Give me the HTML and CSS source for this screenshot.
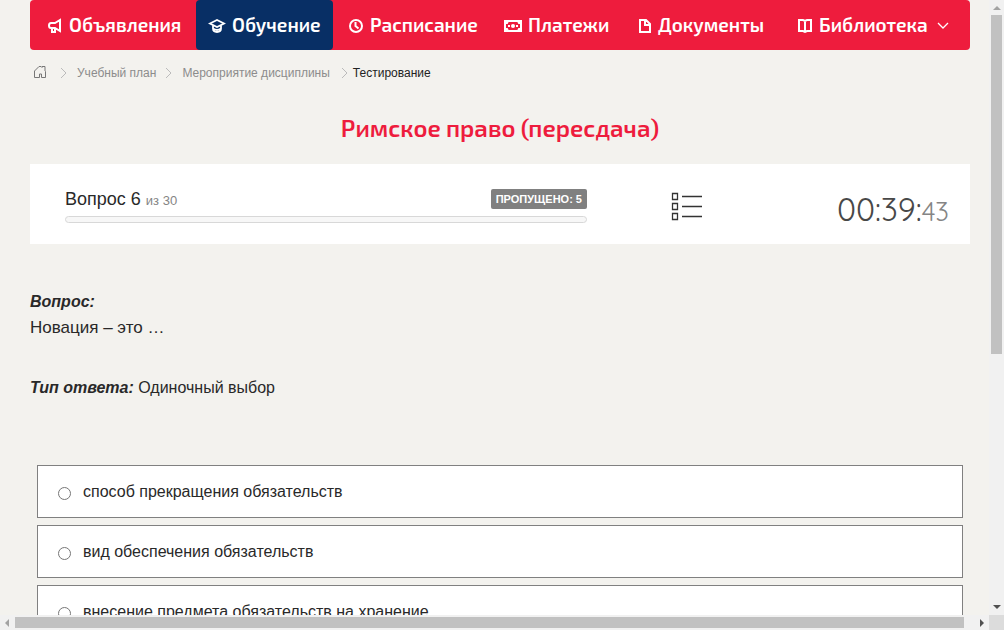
FILE: index.html
```html
<!DOCTYPE html>
<html lang="ru">
<head>
<meta charset="utf-8">
<meta name="viewport" content="width=device-width, initial-scale=1">
<title>Тестирование</title>
<link rel="stylesheet" href="styles.css">
</head>
<body>
<div class="window">
  <div class="viewport">
    <nav class="nav" aria-label="Главное меню">
      <a class="nav-item" href="#"><svg width="16" height="16" viewBox="0 0 16 16" fill="none" stroke="currentColor" stroke-width="2"><path d="M13 2v11L8 10H4Q2 10 2 7.500T4 5h4zM5 10v4h3v-3"/></svg><span>Объявления</span></a>
      <a class="nav-item nav-item-active" href="#"><svg width="18" height="16" viewBox="0 0 18 16" fill="none" stroke="currentColor" stroke-width="1.800"><path d="M2 5.500L9 2l7 3.500L9 9zM5 7.500v3q0 3.500 4 3.500t4-3.500v-3M5 10.500q4 3 8 0"/></svg><span>Обучение</span></a>
      <a class="nav-item" href="#"><svg width="16" height="16" viewBox="0 0 16 16" fill="none" stroke="currentColor" stroke-width="2"><circle cx="8" cy="8" r="6"/><path d="M7.500 4v4l3 2.500"/></svg><span>Расписание</span></a>
      <a class="nav-item" href="#"><svg width="18" height="16" viewBox="0 0 18 16" fill="none" stroke="currentColor" stroke-width="2"><path d="M1 3h16v10H1zM1 5h2l1-2M17 5h-2l-1-2M1 11h2l1 2M17 11h-2l-1 2"/><circle cx="9" cy="8" r="2" fill="currentColor" stroke="none"/><path d="M4 8h2M12 8h2"/></svg><span>Платежи</span></a>
      <a class="nav-item" href="#"><svg width="14" height="16" viewBox="0 0 14 16" fill="none" stroke="currentColor" stroke-width="2"><path d="M2 2h6l4 4v8H2zM7 2v5h5"/></svg><span>Документы</span></a>
      <a class="nav-item" href="#"><svg width="16" height="16" viewBox="0 0 16 16" fill="none" stroke="currentColor" stroke-width="2"><path d="M2 2h4l2 1 2-1h4v11h-4l-2 1-2-1H2zM8 3v12"/></svg><span>Библиотека</span><svg class="chevron" width="12" height="8" viewBox="0 0 12 8" fill="none" stroke="currentColor" stroke-width="1.300"><path d="M1 1l5 5 5-5"/></svg></a>
    </nav>

    <nav class="crumbs" aria-label="Навигация">
      <a href="#" aria-label="Главная"><svg width="14" height="14" viewBox="0 0 14 14" fill="none" stroke="#777"><path d="M1.500 12.500V6L6 1.500h2L9 2.500V1.500h3V6l.5.500v6H8.500V9h-2v3.500z"/></svg></a>
      <svg class="sep" width="8" height="12" viewBox="0 0 8 12"><path d="M1 1l5 5-5 5"/></svg>
      <a href="#">Учебный план</a>
      <svg class="sep" width="8" height="12" viewBox="0 0 8 12"><path d="M1 1l5 5-5 5"/></svg>
      <a href="#">Мероприятие дисциплины</a>
      <svg class="sep sep-last" width="8" height="12" viewBox="0 0 8 12"><path d="M1 1l5 5-5 5"/></svg>
      <span class="crumb-current">Тестирование</span>
    </nav>

    <h1 class="title">Римское право (пересдача)</h1>

    <section class="status">
      <div class="progress">
        <div class="progress-head">
          <div class="counter">Вопрос 6 <small>из 30</small></div>
          <span class="badge">ПРОПУЩЕНО: 5</span>
        </div>
        <div class="track"></div>
      </div>
      <button class="list-button" type="button" aria-label="Список вопросов"><svg width="32" height="30" viewBox="0 0 32 30" fill="none" stroke="#333" stroke-width="1.300"><path d="M1.500 1.500h5v6h-5zM1.500 11.500h5v6h-5zM1.500 21.500h5v6h-5zM11 4.500h20M11 14.500h20M11 24.500h20"/></svg></button>
      <div class="timer">00:39:<span>43</span></div>
    </section>

    <section class="question">
      <h2>Вопрос:</h2>
      <p class="question-text">Новация – это …</p>
      <p class="answer-type"><strong>Тип ответа:</strong> Одиночный выбор</p>
    </section>

    <form class="answers">
      <label class="answer"><input type="radio" name="answer"><span>способ прекращения обязательств</span></label>
      <label class="answer"><input type="radio" name="answer"><span>вид обеспечения обязательств</span></label>
      <label class="answer"><input type="radio" name="answer"><span>внесение предмета обязательств на хранение</span></label>
    </form>
  </div>

  <div class="bar bar-vertical" aria-hidden="true">
    <svg width="15" height="15" viewBox="0 0 15 15" fill="#a3a3a3"><path d="M4 10h8L8 6z"/></svg>
    <div class="rail"><div class="thumb"></div></div>
    <svg width="15" height="15" viewBox="0 0 15 15" fill="#505050"><path d="M4 5h8L8 9z"/></svg>
  </div>
  <div class="bar bar-horizontal" aria-hidden="true">
    <svg width="15" height="15" viewBox="0 0 15 15" fill="#a3a3a3"><path d="M9 4v8L5 8z"/></svg>
    <div class="rail"><div class="thumb"></div></div>
    <svg width="15" height="15" viewBox="0 0 15 15" fill="#505050"><path d="M6 4v8l4-4z"/></svg>
  </div>
  <div class="corner"></div>
</div>
</body>
</html>
```
FILE: styles.css
```css
* {
  box-sizing: border-box;
}

body {
  margin: 0;
  background: #f3f2ee;
  color: #292929;
  font-family: "Liberation Sans", Arial, sans-serif;
  font-size: 16px;
}

a {
  color: inherit;
  text-decoration: none;
}

h1, h2, p {
  margin: 0;
}

svg {
  flex: none;
}

.window {
  display: grid;
  grid-template: minmax(0, 1fr) 15px / minmax(0, 1fr) 15px;
  height: 100vh;
}

.viewport {
  overflow: hidden;
  padding: 0 19px 0 30px;
}

.nav {
  display: grid;
  grid-template-columns: 161fr 140fr 156fr 134fr 159fr 185fr;
  height: 50px;
  padding-left: 5px;
  border-radius: 4px;
  background: #ee1c3d;
  color: #fff;
  font: 600 19px "Exo 2", "Noto Sans", sans-serif;
}

.nav-item {
  display: flex;
  align-items: center;
  gap: 6px;
  padding: 0 0 2px 12px;
  white-space: nowrap;
}

.nav-item svg {
  margin-top: 3px;
}

.nav-item-active {
  margin-right: 3px;
  border-radius: 4px;
  background: #082f65;
}

.nav-item .chevron {
  margin-left: 3px;
}

.crumbs {
  display: flex;
  align-items: center;
  height: 46px;
  padding-left: 3px;
  color: #8c8c8c;
  font-size: 12px;
}

.sep {
  margin: 0 9px;
  fill: none;
  stroke: #bbb;
}

.sep:nth-child(2) {
  margin-left: 13px;
}

.sep-last {
  margin: 0 4px 0 11px;
}

.crumb-current {
  color: #222;
}

.title {
  padding: 15px 0 19px;
  color: #ee1c3d;
  font: 600 24px/34px "Exo 2", "Noto Sans", sans-serif;
  text-align: center;
}

.status {
  display: grid;
  grid-template-columns: 522fr 84fr 32px 246fr;
  height: 80px;
  padding: 0 21px 0 35px;
  background: #fff;
}

.progress {
  padding-top: 25px;
}

.progress-head {
  display: flex;
  align-items: center;
  justify-content: space-between;
  height: 20px;
}

.counter {
  font-size: 18px;
}

.counter small {
  color: #858585;
  font-size: 13px;
}

.badge {
  padding: 0 5px;
  border-radius: 2px;
  background: #808080;
  color: #fff;
  font-size: 11px;
  font-weight: 700;
  line-height: 20px;
}

.track {
  height: 7px;
  margin-top: 7px;
  border: 1px solid #d8d8d8;
  border-radius: 4px;
  background: #f7f7f7;
}

.list-button {
  grid-column: 3;
  margin-top: 28px;
  height: 30px;
  padding: 0;
  border: 0;
  background: none;
}

.list-button svg {
  display: block;
}

.timer {
  padding-top: 25px;
  color: #484848;
  font: 400 32px/40px Quicksand, Lato, sans-serif;
  text-align: right;
  white-space: nowrap;
}

.timer span {
  color: #858585;
  font-size: 26px;
}

.question {
  padding-top: 48px;
  line-height: 20px;
}

.question h2,
.question strong {
  font-size: 16px;
  font-style: italic;
}

.question-text {
  margin-top: 6px;
  font-size: 17px;
}

.answer-type {
  margin-top: 40px;
}

.answers {
  display: grid;
  gap: 7px;
  padding: 67px 7px 0;
}

.answer {
  display: flex;
  align-items: center;
  height: 53px;
  padding-left: 20px;
  border: 1px solid #808080;
  background: #fff;
}

.answer input {
  width: 13px;
  height: 13px;
  margin: 4px 12px 0 0;
}

.bar {
  display: flex;
  background: #f1f1f1;
}

.bar-vertical {
  flex-direction: column;
}

.rail {
  flex: 1;
}

.bar-vertical .rail {
  padding: 0 2px;
}

.bar-horizontal .rail {
  padding: 2px 0;
}

.thumb {
  height: 100%;
  background: #c1c1c1;
}

.bar-vertical .thumb {
  height: 58%;
}

.bar-horizontal .thumb {
  width: 99%;
}

.corner {
  background: #dcdcdc;
}
```
